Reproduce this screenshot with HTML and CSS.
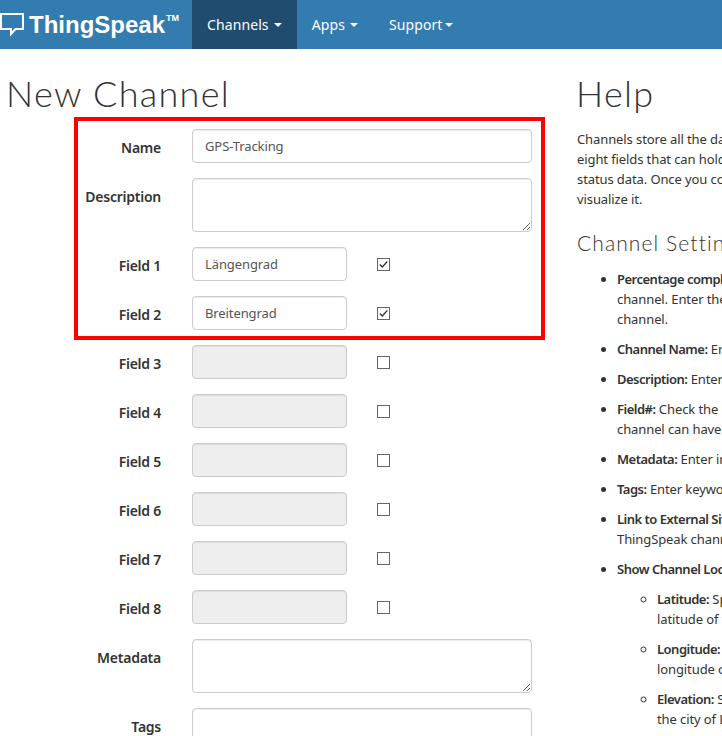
FILE: index.html
```html
<!DOCTYPE html>
<html lang="en">
<head>
<meta charset="utf-8">
<title>New Channel - ThingSpeak</title>
<link rel="stylesheet" href="styles.css">
</head>
<body>
<nav class="navbar">
  <a class="brand">
    <svg class="brand-icon" width="25" height="26" viewBox="0 0 25 26"><path d="M1 2H23V17H15.500L11 22V17H1Z" fill="none" stroke="#fff" stroke-width="2"/></svg>
    <span class="brand-name">ThingSpeak</span><sup class="tm">TM</sup>
  </a>
  <a class="nav-item active">Channels <i class="caret"></i></a>
  <a class="nav-item">Apps <i class="caret"></i></a>
  <a class="nav-item tight">Support<i class="caret"></i></a>
</nav>
<main class="page">
  <section class="form-col">
    <h1>New Channel</h1>
    <form class="form">
      <label class="lbl">Name</label>
      <div class="ctl wide"><input class="txt" value="GPS-Tracking"></div>
      <label class="lbl">Description</label>
      <div class="ctl wide"><textarea class="area"></textarea></div>
      <label class="lbl">Field 1</label>
      <div class="ctl"><input class="txt short" value="Längengrad"><span class="check"><svg width="13" height="13" viewBox="0 0 13 13"><path d="M2.800 6.500L5.300 9L10.300 3.500" fill="none" stroke="#333" stroke-width="1.300"/></svg></span></div>
      <label class="lbl">Field 2</label>
      <div class="ctl"><input class="txt short" value="Breitengrad"><span class="check"><svg width="13" height="13" viewBox="0 0 13 13"><path d="M2.800 6.500L5.300 9L10.300 3.500" fill="none" stroke="#333" stroke-width="1.300"/></svg></span></div>
      <label class="lbl">Field 3</label>
      <div class="ctl"><input class="txt short" disabled><span class="check"></span></div>
      <label class="lbl">Field 4</label>
      <div class="ctl"><input class="txt short" disabled><span class="check"></span></div>
      <label class="lbl">Field 5</label>
      <div class="ctl"><input class="txt short" disabled><span class="check"></span></div>
      <label class="lbl">Field 6</label>
      <div class="ctl"><input class="txt short" disabled><span class="check"></span></div>
      <label class="lbl">Field 7</label>
      <div class="ctl"><input class="txt short" disabled><span class="check"></span></div>
      <label class="lbl">Field 8</label>
      <div class="ctl"><input class="txt short" disabled><span class="check"></span></div>
      <label class="lbl">Metadata</label>
      <div class="ctl wide"><textarea class="area"></textarea></div>
      <label class="lbl">Tags</label>
      <div class="ctl wide"><input class="txt"></div>
    </form>
    <div class="highlight"></div>
  </section>
  <section class="help-col">
    <h1>Help</h1>
    <p>Channels store all the data that a ThingSpeak application collects. Each channel includes eight fields that can hold any type of data, plus three fields for location data and one for status data. Once you collect data in a channel, you can use ThingSpeak apps to analyze and visualize it.</p>
    <h2>Channel Settings</h2>
    <ul>
      <li><b>Percentage complete:</b> Calculated based on data entered into the various fields of a channel. Enter the name, description, location, URL, video, and tags to complete your channel.</li>
      <li><b>Channel Name:</b> Enter a unique name for the ThingSpeak channel.</li>
      <li><b>Description:</b> Enter a description of the ThingSpeak channel.</li>
      <li><b>Field#:</b> Check the box to enable the field, and enter a field name. Each ThingSpeak channel can have up to 8 fields.</li>
      <li><b>Metadata:</b> Enter information about channel data, including JSON, XML, or CSV data.</li>
      <li><b>Tags:</b> Enter keywords that identify the channel. Separate tags with commas.</li>
      <li><b>Link to External Site:</b> If you have a website that contains information about your ThingSpeak channel, specify the URL.</li>
      <li><b>Show Channel Location:</b>
        <ul>
          <li><b>Latitude:</b> Specify the latitude position in decimal degrees. For example, the latitude of the city of London is 51.5072.</li>
          <li><b>Longitude:</b> Specify the longitude position in decimal degrees. For example, the longitude of the city of London is -0.1275.</li>
          <li><b>Elevation:</b> Specify the elevation position in meters. For example, the elevation of the city of London is 35.756.</li>
        </ul>
      </li>
    </ul>
  </section>
</main>
</body>
</html>
```

FILE: styles.css
```css
* { box-sizing: border-box; }
html, body { margin: 0; height: 736px; overflow: hidden; }
body { font-family: "Noto Sans", sans-serif; font-size: 13px; line-height: 20px; letter-spacing: -.1px; color: #333; background: #fff; }

.navbar { display: flex; height: 49px; background: #337cb0; color: #fff; align-items: stretch; }
.brand { display: flex; align-items: center; width: 192px; position: relative; }
.brand-icon { flex: none; width: 25px; margin-top: 1px; }
.brand-name { font-family: "Liberation Sans", sans-serif; font-weight: 700; font-size: 24px; letter-spacing: 0; margin-left: 4px; }
.tm { font-family: "Liberation Sans", sans-serif; font-weight: 700; font-size: 9px; line-height: 1; letter-spacing: 0; align-self: flex-start; margin: 14px 0 0 1px; }
.nav-item { display: flex; align-items: center; padding: 0 15px; font-size: 14px; letter-spacing: .1px; white-space: nowrap; }
.nav-item .caret { margin-left: 5px; }
.nav-item.tight { padding-left: 16px; }
.nav-item.tight .caret { margin-left: 2px; }
.nav-item.active { background: #204d6f; }
.caret { display: inline-block; width: 0; height: 0; border-top: 4px solid #fff; border-left: 4px solid transparent; border-right: 4px solid transparent; }

.page { display: flex; align-items: flex-start; width: 1200px; }
.form-col { position: relative; flex: none; width: 577px; padding-left: 7px; }
.help-col { flex: none; width: 564px; }

h1 { font-family: Lato, sans-serif; font-weight: 300; font-size: 36px; line-height: 40px; letter-spacing: 1.300px; margin: 24px 0 16px -1px; color: #333; }

.form { display: grid; grid-template-columns: 154px 340px; column-gap: 31px; row-gap: 15px; }
.lbl { font-weight: 600; font-size: 14px; line-height: 22px; text-align: right; padding-top: 8px; letter-spacing: -.25px; }
.ctl { display: flex; align-items: center; }
.ctl.wide { display: block; }
.txt { display: block; width: 100%; height: 34px; padding: 6px 12px; border: 1px solid #ccc; border-radius: 4px; font: 13px/20px "Noto Sans", sans-serif; letter-spacing: -.1px; color: #555; background: #fff; box-shadow: inset 0 1px 1px rgba(0,0,0,.075); }
.txt.short { width: 155px; flex: none; }
.txt:disabled { background: #eee; }
.area { display: block; width: 100%; height: 54px; border: 1px solid #ccc; border-radius: 4px; background: #fff; box-shadow: inset 0 1px 1px rgba(0,0,0,.075); }
.check { flex: none; display: block; width: 13px; height: 13px; margin-left: 30px; border: 1px solid #666; background: #fff; position: relative; }
.check svg { position: absolute; left: -1px; top: -1px; }

.highlight { position: absolute; left: 74px; top: 68px; width: 471px; height: 223px; border: 4px solid #f00; pointer-events: none; }

.help-col p { margin: 0 0 10px; max-width: 556px; }
.help-col h2 { font-family: Lato, sans-serif; font-weight: 300; font-size: 21px; line-height: 22px; letter-spacing: 1.100px; margin: 23px 0 15px; }
.help-col ul { margin: 0; padding-left: 40px; }
.help-col li { margin-bottom: 10px; }
.help-col li ul { margin-top: 10px; }
.help-col b { font-weight: 600; letter-spacing: -.5px; }
```
